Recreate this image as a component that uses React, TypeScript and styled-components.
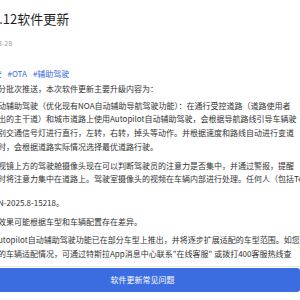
import styled, { createGlobalStyle } from "styled-components"

const GlobalStyle = createGlobalStyle`
  html, body {
    margin: 0;
    padding: 0;
    background: #fff;
    overflow: hidden;
  }
  body {
    font-family: "Noto Sans CJK SC", "Noto Sans", sans-serif;
    color: #333;
  }
`

const article = [
  { space: 0, lines: ["分批次推送，本次软件更新主要升级内容为："] },
  {
    space: 3,
    lines: [
      "动辅助驾驶（优化现有NOA自动辅助导航驾驶功能）：在通行受控道路（道路使用者",
      "出的主干道）和城市道路上使用Autopilot自动辅助驾驶，会根据导航路线引导车辆驶",
      "别交通信号灯进行直行，左转，右转，掉头等动作。并根据速度和路线自动进行变道",
      "时，会根据道路实际情况选择最优道路行驶。",
    ],
  },
  {
    space: 5,
    lines: [
      "视镜上方的驾驶舱摄像头现在可以判断驾驶员的注意力是否集中，并通过警报，提醒",
      "时将注意力集中在道路上。驾驶室摄像头的视频在车辆内部进行处理。任何人（包括Te",
    ],
  },
  { space: 10, lines: ["N-2025.8-15218。"] },
  { space: 5, lines: ["效果可能根据车型和车辆配置存在差异。"] },
  {
    space: 5,
    lines: [
      "utopilot自动辅助驾驶功能已在部分车型上推出，并将逐步扩展适配的车型范围。如您",
      "的车辆适配情况，可通过特斯拉App消息中心联系\"在线客服\" 或拨打400客服热线查",
    ],
  },
]

export default function App() {
  return (
    <>
      <GlobalStyle />
      <Page>
        <Title>8.12软件更新</Title>
        <DateLine>8-28</DateLine>
        <Tags>
          <Tag>#智能驾驶</Tag>
          <Tag>#OTA</Tag>
          <Tag>#辅助驾驶</Tag>
        </Tags>
        <Article>
          {article.map((p, idx) => (
            <Paragraph key={idx} $space={p.space}>
              {p.lines.map((l, i) => <Line key={i}>{l}</Line>)}
            </Paragraph>
          ))}
        </Article>
        <Footer>
          <FaqButton>软件更新常见问题</FaqButton>
        </Footer>
      </Page>
    </>
  )
}

const Page = styled.div`
  margin-left: -2px;
  padding-top: 10px;
  display: flex;
  flex-direction: column;
`
const Title = styled.h1`
  margin: 0 0 0 -6px;
  font-size: 13px;
  line-height: 18px;
  font-weight: 400;
  color: #1f1f1f;
  white-space: nowrap;
`
const DateLine = styled.div`
  margin-top: 10px;
  font-size: 7px;
  line-height: 10px;
  color: #a0a0a0;
`
const Tags = styled.div`
  display: flex;
  gap: 6px;
  margin: 20px 0 0 -33px;
  white-space: nowrap;
`
const Tag = styled.span`
  font-size: 8px;
  line-height: 12px;
  color: #3b6de0;
`
const Article = styled.div`
  margin-top: 2px;
  display: flex;
  flex-direction: column;
`
const Paragraph = styled.p<{ $space: number }>`
  margin: ${p => p.$space}px 0 0;
  font-size: 8px;
  line-height: 13.7px;
  color: #333;
`
const Line = styled.span`
  display: block;
  white-space: nowrap;
`
const Footer = styled.div`
  margin: 5px 0 0 -13px;
  padding: 1px 0 8px;
  border-top: 1px solid #e6e6e6;
`
const FaqButton = styled.button`
  display: block;
  width: 100%;
  height: 24px;
  border: none;
  border-radius: 3px;
  background: #3b6de0;
  color: #fff;
  font-family: inherit;
  font-size: 8px;
`
